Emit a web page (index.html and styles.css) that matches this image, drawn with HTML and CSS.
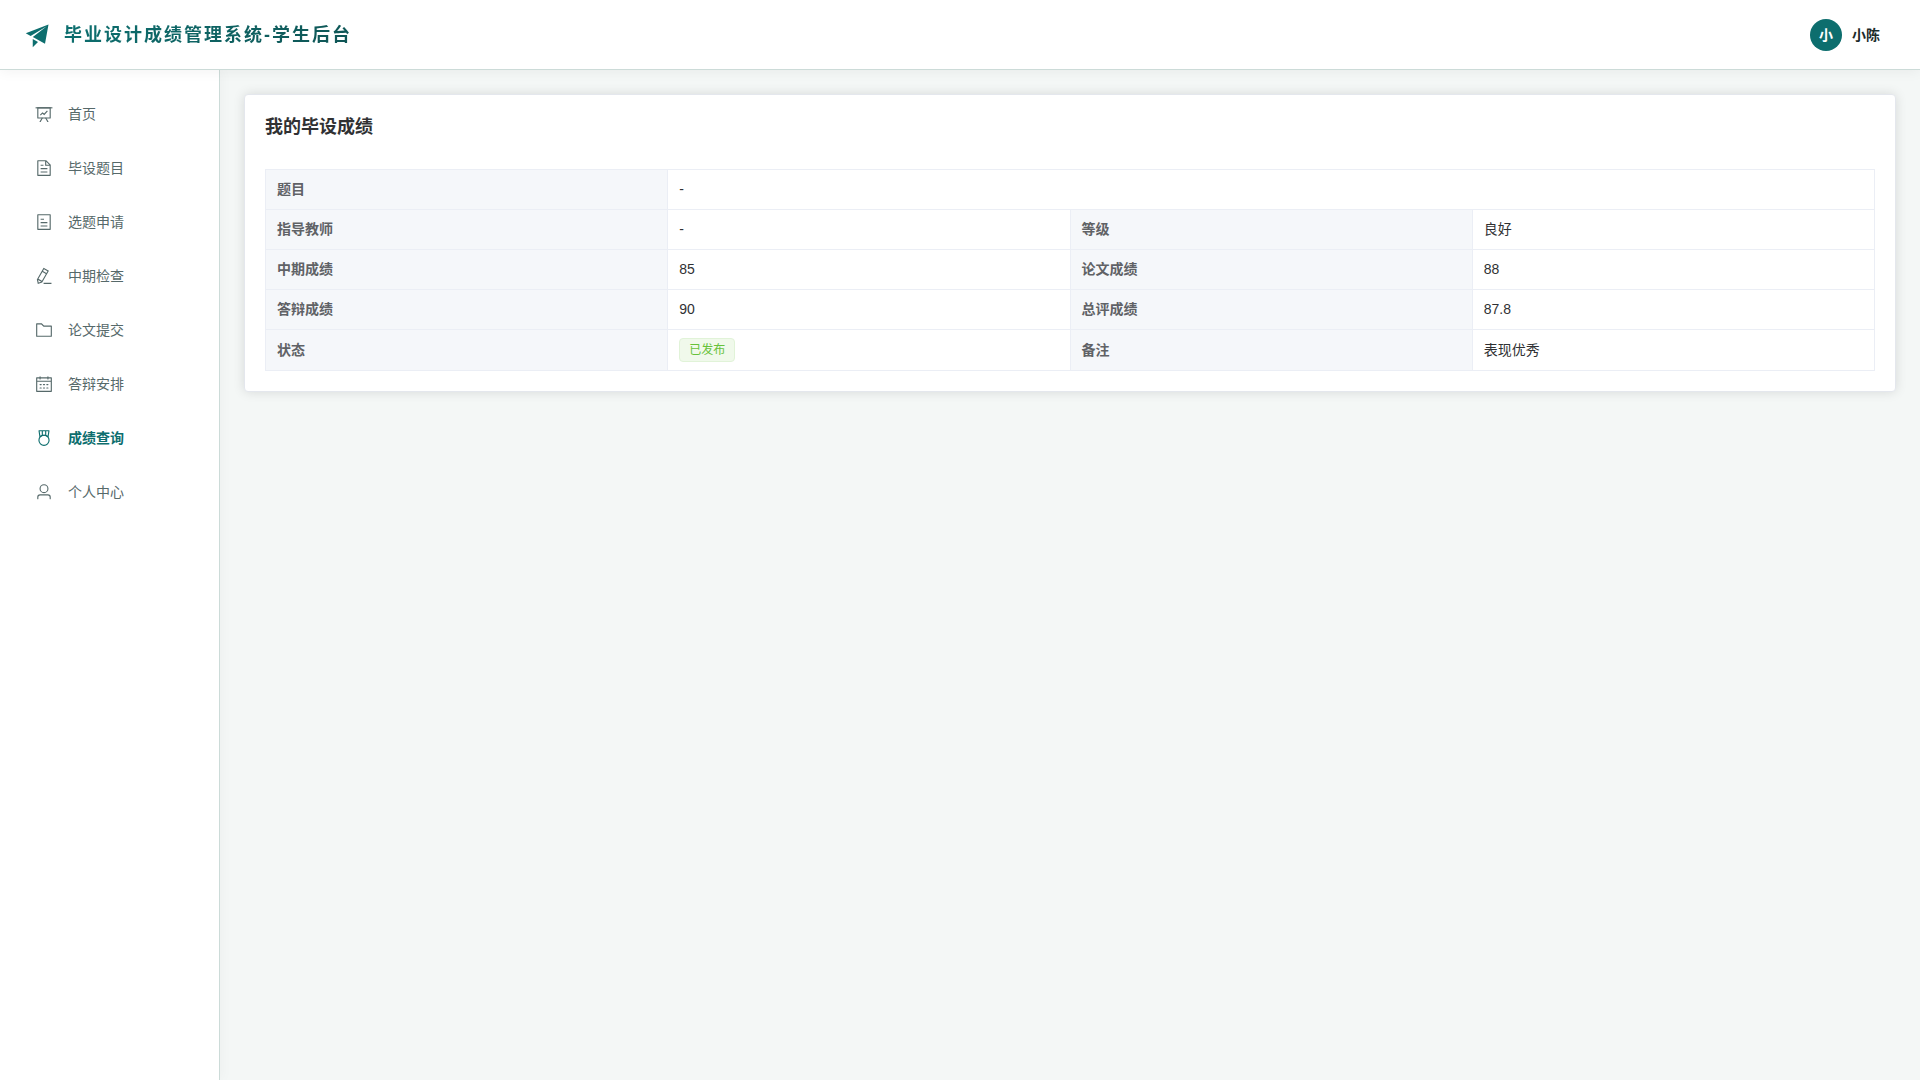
FILE: index.html
```html
<!DOCTYPE html>
<html lang="zh-CN">
<head>
<meta charset="utf-8">
<title>毕业设计成绩管理系统-学生后台</title>
<link rel="stylesheet" href="styles.css">
</head>
<body>
<header class="header">
  <div class="brand">
    <svg class="brand-icon" viewBox="0 0 1024 1024" aria-hidden="true"><path d="m64 448 832-320-128 704-446.08-243.328L832 192 242.816 545.536zm256 512V657.024L512 768z"/></svg>
    <span class="brand-title">毕业设计成绩管理系统-学生后台</span>
  </div>
  <button class="account" type="button">
    <span class="avatar">小</span>
    <span class="account-name">小陈</span>
  </button>
</header>
<div class="body">
  <nav class="sidebar">
    <a class="menu-item" href="#home">
      <svg class="menu-icon" viewBox="0 0 1024 1024" aria-hidden="true"><path d="M32 128h960v64H32z"/><path d="M192 192v512h640V192zm-64-64h768v608a32 32 0 0 1-32 32H160a32 32 0 0 1-32-32z"/><path d="M322.176 960H248.32l144.64-250.56 55.424 32zm453.888 0h-73.856L576 741.44l55.424-32z"/><path d="m281 553 144-144 96 80 160-176 48 44-204 224-98-82-100 100z"/></svg>
      <span>首页</span>
    </a>
    <a class="menu-item" href="#topics">
      <svg class="menu-icon" viewBox="0 0 1024 1024" aria-hidden="true"><path d="M832 384H576V128H192v768h640zm-26.496-64L640 154.496V320zM160 64h480l256 256v608a32 32 0 0 1-32 32H160a32 32 0 0 1-32-32V96a32 32 0 0 1 32-32m160 448h384v64H320zm0-192h160v64H320zm0 384h384v64H320z"/></svg>
      <span>毕设题目</span>
    </a>
    <a class="menu-item" href="#apply">
      <svg class="menu-icon" viewBox="0 0 1024 1024" aria-hidden="true"><path d="M192 128v768h640V128zm-32-64h704a32 32 0 0 1 32 32v832a32 32 0 0 1-32 32H160a32 32 0 0 1-32-32V96a32 32 0 0 1 32-32m160 448h384v64H320zm0-192h192v64H320zm0 384h384v64H320z"/></svg>
      <span>选题申请</span>
    </a>
    <a class="menu-item" href="#midterm">
      <svg class="menu-icon" viewBox="0 0 1024 1024" aria-hidden="true"><path d="m199.04 672.64 193.984 112 224-387.968-193.92-112-224 388.032zm-23.872 60.16 32.896 148.288 144.896-45.696zM455.04 229.248l193.92 112 56.704-98.112-193.984-112zM104.32 708.8l384-665.024 304.768 175.936L409.152 884.8h.064l-248.448 78.336zm384 254.272v-64h448v64z"/></svg>
      <span>中期检查</span>
    </a>
    <a class="menu-item" href="#thesis">
      <svg class="menu-icon" viewBox="0 0 1024 1024" aria-hidden="true"><path d="M128 192v640h768V320H485.76L357.504 192zm-32-64h287.872l128.384 128H928a32 32 0 0 1 32 32v576a32 32 0 0 1-32 32H96a32 32 0 0 1-32-32V160a32 32 0 0 1 32-32"/></svg>
      <span>论文提交</span>
    </a>
    <a class="menu-item" href="#defense">
      <svg class="menu-icon" viewBox="0 0 1024 1024" aria-hidden="true"><path d="M128 384v512h768V192H768v32a32 32 0 1 1-64 0v-32H320v32a32 32 0 0 1-64 0v-32H128v128h768v64zm192-256h384V96a32 32 0 1 1 64 0v32h160a32 32 0 0 1 32 32v768a32 32 0 0 1-32 32H96a32 32 0 0 1-32-32V160a32 32 0 0 1 32-32h160V96a32 32 0 0 1 64 0zm-32 384h64a32 32 0 0 1 0 64h-64a32 32 0 0 1 0-64m0 192h64a32 32 0 1 1 0 64h-64a32 32 0 1 1 0-64m192-192h64a32 32 0 0 1 0 64h-64a32 32 0 0 1 0-64m0 192h64a32 32 0 1 1 0 64h-64a32 32 0 1 1 0-64m192-192h64a32 32 0 1 1 0 64h-64a32 32 0 1 1 0-64m0 192h64a32 32 0 1 1 0 64h-64a32 32 0 1 1 0-64"/></svg>
      <span>答辩安排</span>
    </a>
    <a class="menu-item menu-item-active" href="#scores" aria-current="page">
      <svg class="menu-icon" viewBox="0 0 1024 1024" aria-hidden="true"><path d="M512 896a256 256 0 1 0 0-512 256 256 0 0 0 0 512m0 64a320 320 0 1 1 0-640 320 320 0 0 1 0 640"/><path d="M576 128H448v200a286.72 286.72 0 0 1 64-8c19.52 0 40.832 2.688 64 8zm64 0v219.648c24.448 9.088 50.56 20.416 78.4 33.92L757.44 128zm-256 0H266.624l39.04 253.568c27.84-13.504 53.888-24.832 78.336-33.92V128zM229.312 64h565.376a32 32 0 0 1 31.616 36.864L768 480c-113.792-64-199.104-96-256-96-56.896 0-142.208 32-256 96l-58.304-379.136A32 32 0 0 1 229.312 64"/></svg>
      <span>成绩查询</span>
    </a>
    <a class="menu-item" href="#profile">
      <svg class="menu-icon" viewBox="0 0 1024 1024" aria-hidden="true"><path d="M512 512a192 192 0 1 0 0-384 192 192 0 0 0 0 384m0 64a256 256 0 1 1 0-512 256 256 0 0 1 0 512m320 320v-96a96 96 0 0 0-96-96H288a96 96 0 0 0-96 96v96a32 32 0 1 1-64 0v-96a160 160 0 0 1 160-160h448a160 160 0 0 1 160 160v96a32 32 0 1 1-64 0"/></svg>
      <span>个人中心</span>
    </a>
  </nav>
  <main class="main">
    <section class="card">
      <h1 class="card-title">我的毕设成绩</h1>
      <table class="scores">
        <tbody>
          <tr><th scope="row">题目</th><td colspan="3">-</td></tr>
          <tr><th scope="row">指导教师</th><td>-</td><th scope="row">等级</th><td>良好</td></tr>
          <tr><th scope="row">中期成绩</th><td>85</td><th scope="row">论文成绩</th><td>88</td></tr>
          <tr><th scope="row">答辩成绩</th><td>90</td><th scope="row">总评成绩</th><td>87.8</td></tr>
          <tr><th scope="row">状态</th><td><span class="tag">已发布</span></td><th scope="row">备注</th><td>表现优秀</td></tr>
        </tbody>
      </table>
    </section>
  </main>
</div>
</body>
</html>
```
FILE: styles.css
```css
* {
  box-sizing: border-box;
}

body {
  display: flex;
  flex-direction: column;
  min-height: 100vh;
  margin: 0;
  background: #f4f7f6;
  color: #303133;
  font-family: "Liberation Sans", "Noto Sans CJK SC", sans-serif;
  font-size: 14px;
}

.header {
  position: relative;
  z-index: 1;
  display: flex;
  align-items: center;
  justify-content: space-between;
  height: 70px;
  padding: 0 40px 0 24px;
  background: #fff;
  border-bottom: 1px solid #ccdbd8;
  box-shadow: 0 2px 12px rgba(0, 0, 0, 0.05);
}

.brand {
  display: flex;
  align-items: center;
  gap: 12px;
}

.brand-icon {
  width: 28px;
  height: 28px;
  fill: #0d6e6e;
}

.brand-title {
  background: linear-gradient(135deg, #0d7070, #0f5555);
  background-clip: text;
  color: transparent;
  font-size: 18px;
  font-weight: 700;
  letter-spacing: 2px;
  line-height: 28px;
}

.account {
  display: flex;
  align-items: center;
  gap: 10px;
  padding: 0;
  border: 0;
  background: none;
  color: #1c2b2a;
  font: inherit;
  font-weight: 700;
  line-height: 32px;
  cursor: pointer;
}

.avatar {
  width: 32px;
  height: 32px;
  border-radius: 50%;
  background: #0d6e6e;
  color: #fff;
  text-align: center;
}

.body {
  display: flex;
  flex: 1;
}

.sidebar {
  display: flex;
  flex-direction: column;
  gap: 4px;
  width: 220px;
  padding: 19px 10px;
  background: #fff;
  border-right: 1px solid #ccdbd8;
  box-shadow: 2px 0 12px rgba(0, 0, 0, 0.03);
}

.menu-item {
  display: flex;
  align-items: center;
  gap: 15px;
  padding: 0 25px;
  color: #56696a;
  line-height: 50px;
  text-decoration: none;
}

.menu-item-active {
  color: #0d6e6e;
  font-weight: 700;
}

.menu-icon {
  width: 18px;
  height: 18px;
  fill: currentColor;
}

.main {
  flex: 1;
  min-width: 0;
  padding: 24px;
}

.card {
  padding: 20px;
  background: #fff;
  border: 1px solid #e4e7ed;
  border-radius: 4px;
  box-shadow: 0 0 12px rgba(0, 0, 0, 0.12);
}

.card-title {
  margin: 0 0 30px;
  font-size: 18px;
  line-height: 24px;
}

.scores {
  width: 100%;
  table-layout: fixed;
  border-collapse: collapse;
  line-height: 23px;
}

.scores th,
.scores td {
  padding: 8px 11px;
  border: 1px solid #ebeef5;
  text-align: left;
}

.scores th {
  background: #f5f7fa;
  color: #606266;
}

.tag {
  display: inline-flex;
  align-items: center;
  height: 24px;
  padding: 0 9px;
  background: #f0f9eb;
  border: 1px solid #e1f3d8;
  border-radius: 4px;
  color: #67c23a;
  font-size: 12px;
  line-height: 12px;
  vertical-align: middle;
}
```
